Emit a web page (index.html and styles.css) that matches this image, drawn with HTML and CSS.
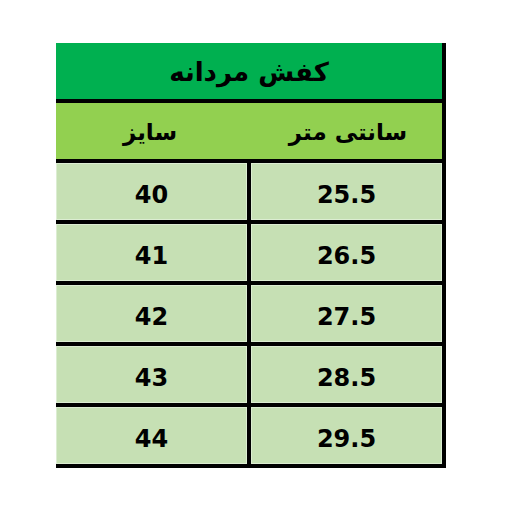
FILE: index.html
```html
<!DOCTYPE html>
<html lang="fa">
<head>
<meta charset="utf-8">
<link rel="stylesheet" href="styles.css">
</head>
<body>
<div class="page">
  <div class="table">
    <div class="cell title">کفش مردانه</div>
    <div class="head">
      <div class="head-cell">سایز</div>
      <div class="head-cell">سانتی متر</div>
    </div>
    <div class="cell data">40</div>
    <div class="cell data">25.5</div>
    <div class="cell data">41</div>
    <div class="cell data">26.5</div>
    <div class="cell data">42</div>
    <div class="cell data">27.5</div>
    <div class="cell data">43</div>
    <div class="cell data">28.5</div>
    <div class="cell data">44</div>
    <div class="cell data">29.5</div>
  </div>
</div>
</body>
</html>
```
FILE: styles.css
```css
html, body {
  margin: 0;
  padding: 0;
  background: #ffffff;
}
.page {
  padding: 43px 0 0 56px;
}
.table {
  display: grid;
  grid-template-columns: 191px 191px;
  grid-template-rows: 56px 56px repeat(5, 57px);
  gap: 4px 4px;
  width: 386px;
  background: #000;
  border-right: 4px solid #000;
  border-bottom: 4px solid #000;
}
.cell {
  display: flex;
  align-items: center;
  justify-content: center;
  color: #000;
  font-weight: 700;
}
.title {
  grid-column: 1 / 3;
  background: #00b050;
  font-family: "DejaVu Sans", sans-serif;
  font-size: 26px;
  direction: rtl;
  padding-top: 2px;
  box-sizing: border-box;
}
.head {
  grid-column: 1 / 3;
  display: flex;
  background: #92d050;
  color: #000;
  font-family: "DejaVu Sans", sans-serif;
  font-weight: 700;
  font-size: 23px;
}
.head-cell {
  flex: 1;
  display: flex;
  align-items: center;
  justify-content: center;
  direction: rtl;
  padding-top: 2px;
}
.head-cell + .head-cell {
  padding-left: 10px;
}
.data {
  background: #c6e0b4;
  font-family: "DejaVu Sans", sans-serif;
  font-size: 24px;
  padding-top: 6px;
  box-sizing: border-box;
  box-shadow: inset 0 0 0 1px #dcedd2;
}
```
